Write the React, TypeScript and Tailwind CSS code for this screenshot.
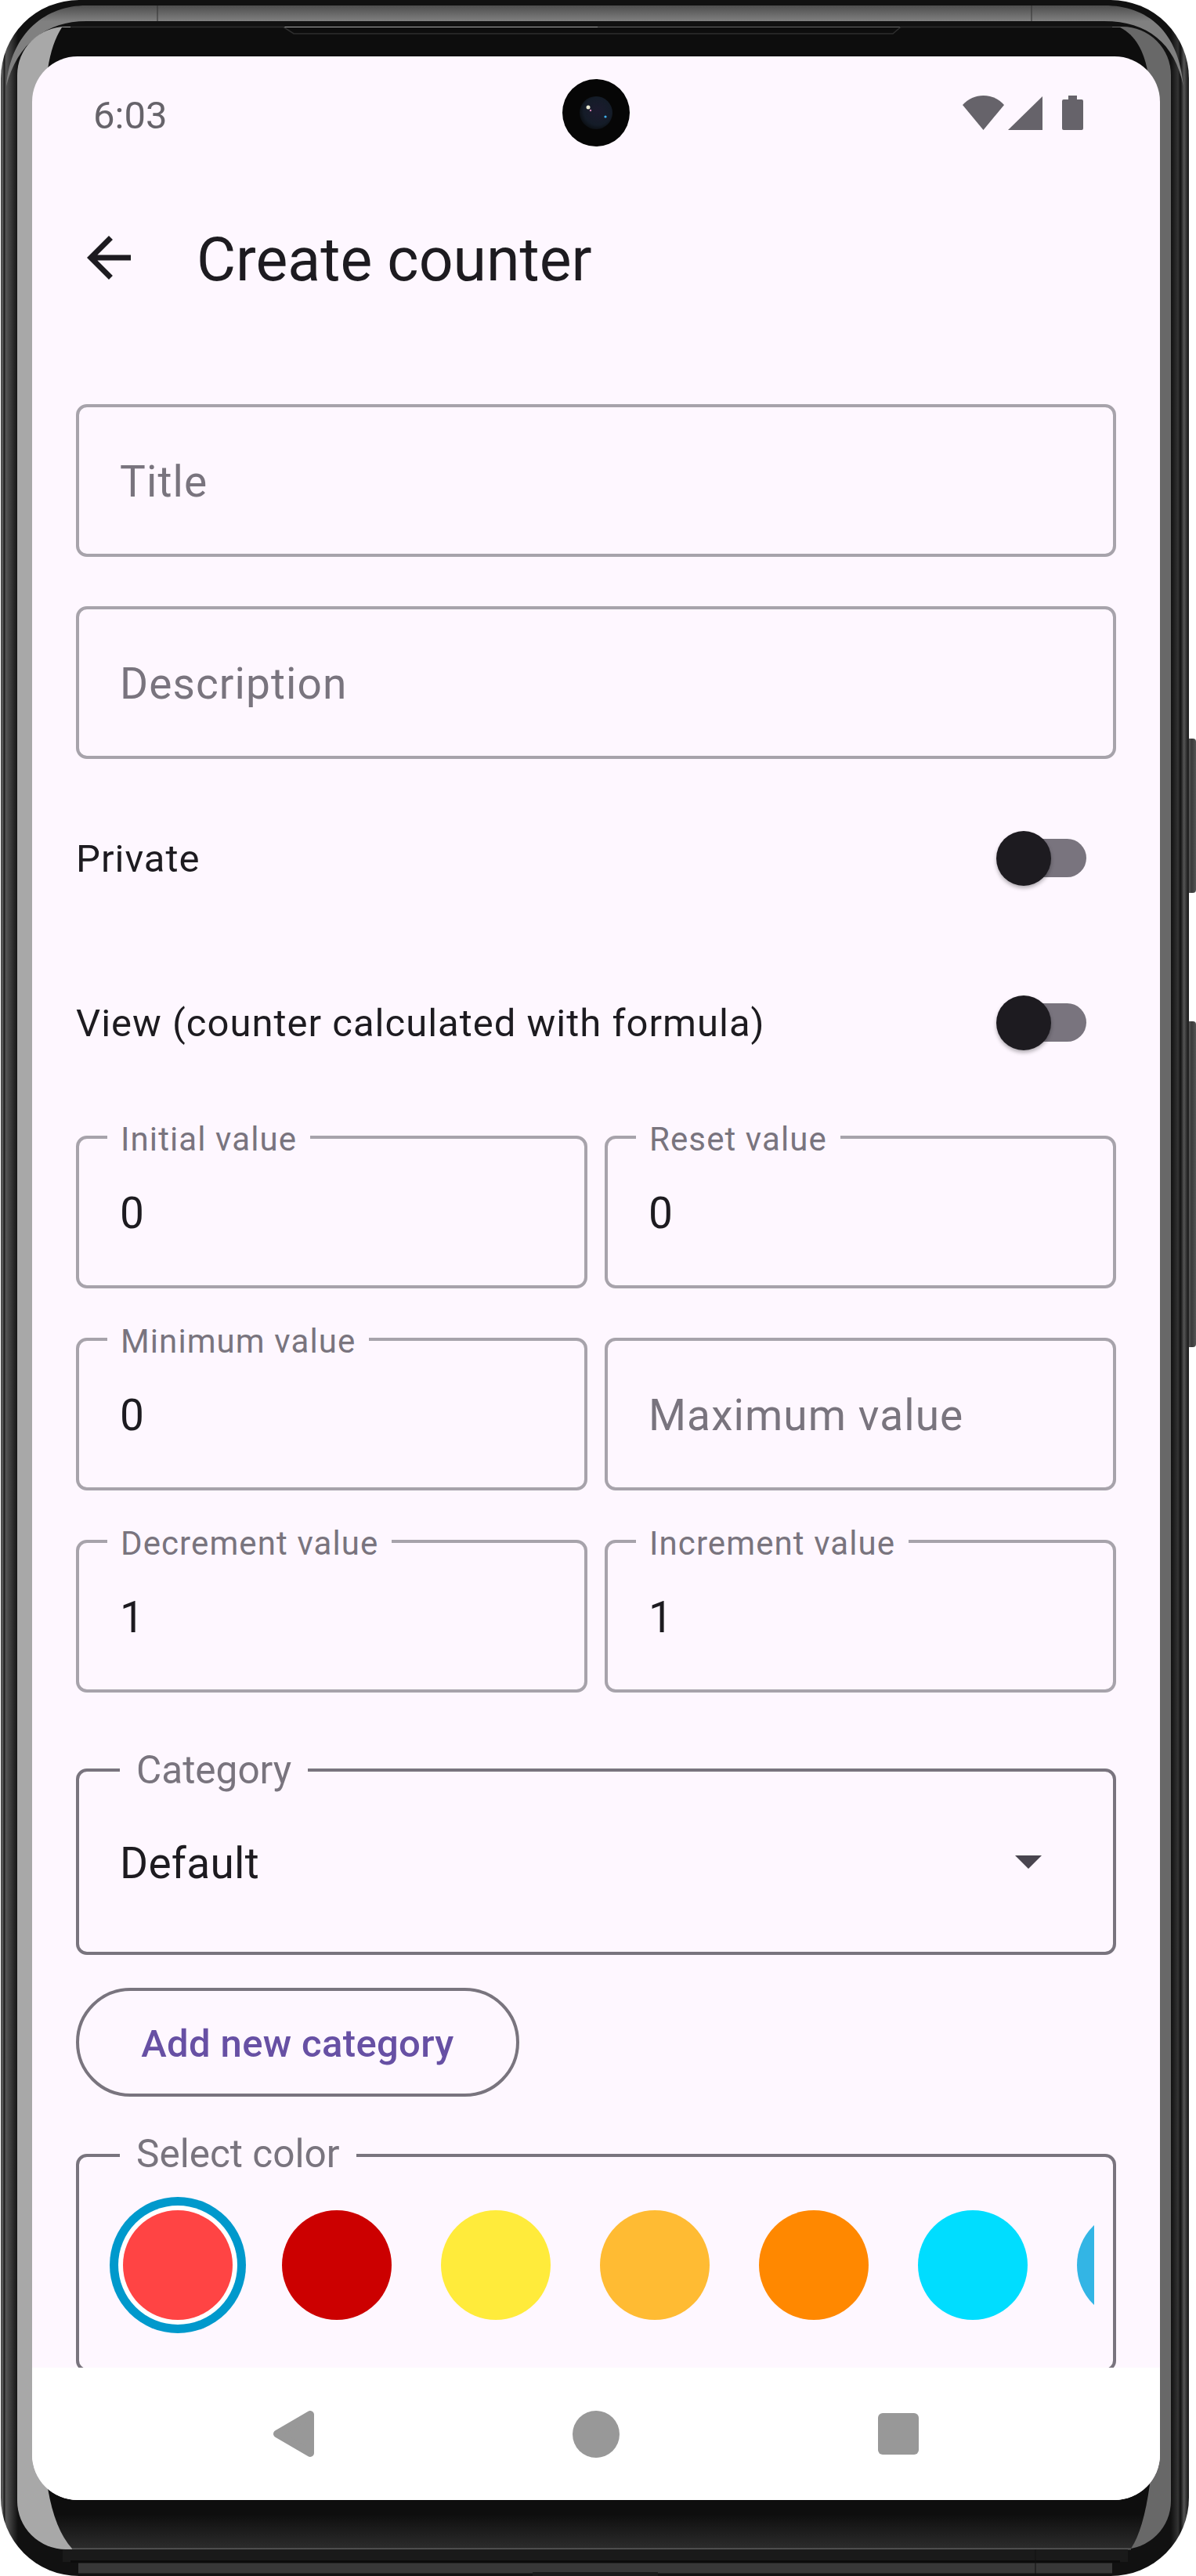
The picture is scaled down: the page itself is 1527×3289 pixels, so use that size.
import React from 'react';

const COLORS = ['#FF4444', '#CC0000', '#FFEB3B', '#FFBB33', '#FF8800', '#00DDFF', '#33B5E5'];

const DeviceFrame = () => (
  <svg className="absolute inset-0" width="1527" height="3289" viewBox="0 0 1527 3289">
    <defs>
      <linearGradient id="rim" x1="0" x2="1527" y1="0" y2="0" gradientUnits="userSpaceOnUse">
        <stop offset="0" stopColor="#2a2a2a" />
        <stop offset="0.002" stopColor="#666" />
        <stop offset="0.0035" stopColor="#1c1c1c" />
        <stop offset="0.005" stopColor="#555" />
        <stop offset="0.009" stopColor="#3a3a3a" />
        <stop offset="0.015" stopColor="#111" />
        <stop offset="0.979" stopColor="#111" />
        <stop offset="0.985" stopColor="#333" />
        <stop offset="0.987" stopColor="#111" />
        <stop offset="0.99" stopColor="#555" />
        <stop offset="0.993" stopColor="#222" />
      </linearGradient>
      <linearGradient id="topBand" x1="0" x2="0" y1="7" y2="27" gradientUnits="userSpaceOnUse">
        <stop offset="0" stopColor="#4d4d4d" />
        <stop offset="1" stopColor="#808080" />
      </linearGradient>
      <linearGradient id="glass" x1="0" x2="1527" y1="0" y2="0" gradientUnits="userSpaceOnUse">
        <stop offset="0.5" stopColor="#a8a8a8" />
        <stop offset="0.5" stopColor="#686868" />
      </linearGradient>
      <linearGradient id="chin" x1="0" x2="0" y1="3192" y2="3254" gradientUnits="userSpaceOnUse">
        <stop offset="0" stopColor="#0e0e0e" />
        <stop offset="0.3" stopColor="#0e0e0e" />
        <stop offset="1" stopColor="#2c2c2c" />
      </linearGradient>
      <linearGradient id="key" x1="1516" x2="1527" y1="0" y2="0" gradientUnits="userSpaceOnUse">
        <stop offset="0" stopColor="#666" />
        <stop offset="0.5" stopColor="#3a3a3a" />
        <stop offset="1" stopColor="#555" />
      </linearGradient>
    </defs>
    <rect x="1514" y="943" width="13" height="197" rx="4" fill="url(#key)" />
    <rect x="1514" y="1304" width="13" height="416" rx="4" fill="url(#key)" />
    <rect x="1" y="0" width="1517" height="3289" rx="100" fill="url(#rim)" />
    <path d="M8 110 C14 40 60 7 110 7 H1410 C1465 7 1505 40 1511 110 C1500 55 1465 27 1410 27 H110 C60 27 22 55 8 110 Z" fill="url(#topBand)" />
    <path d="M201 7 V27 M1317 7 V27" stroke="#333" strokeWidth="1" />
    <rect x="22" y="34" width="1473" height="3221" rx="62" fill="url(#glass)" />
    <path d="M79 35 H1430 C1450 45 1460 65 1465 90 V140 H61 V88 Q66 55 79 35 Z" fill="#0d0d0d" />
    <path d="M90 34.5 H362 L375 43 H1140 L1150 34.5 H1420" fill="none" stroke="#2e2e2e" strokeWidth="1.5" />
    <path d="M61 3120 V3177 Q70 3230 92 3254 H1444 Q1460 3230 1468 3172 V3120 Z" fill="url(#chin)" />
    <path d="M92 3254.5 H1444" stroke="#5a5a5a" strokeWidth="2" />
    <path d="M80 3263 H1440" stroke="#1a1a1a" strokeWidth="16" />
    <path d="M90 3270.5 H1430" stroke="#0c0c0c" strokeWidth="3" />
    <path d="M100 3279 H1420" stroke="#383838" strokeWidth="13" />
    <path d="M680 3286.5 H840" stroke="#1a1a1a" strokeWidth="5" />
    <path d="M1322 3255 V3289" stroke="#111" strokeWidth="1" />
  </svg>
);

const Camera = () => (
  <svg className="absolute left-[677px] top-[29px]" width="86" height="86" viewBox="0 0 86 86">
    <defs>
      <radialGradient id="lens" cx="0.55" cy="0.45" r="0.6">
        <stop offset="0" stopColor="#1c1a2e" />
        <stop offset="0.7" stopColor="#141c28" />
        <stop offset="1" stopColor="#0a0d10" />
      </radialGradient>
    </defs>
    <circle cx="43" cy="43" r="43" fill="#060606" />
    <circle cx="43" cy="43" r="21" fill="url(#lens)" />
    <circle cx="33" cy="36" r="2.5" fill="#e8e8d0" />
    <circle cx="36" cy="40" r="1.2" fill="#d080b0" />
    <circle cx="55" cy="48" r="1.6" fill="#40b0f0" />
  </svg>
);

const StatusBar = () => (
  <div className="relative flex h-[144px] shrink-0 items-center justify-between pl-[78px] pr-[98px]">
    <span className="pt-[6px] text-[49px] leading-none text-[#66636A]">6:03</span>
    <Camera />
    <div className="flex items-center">
      <svg width="53" height="44" viewBox="0 0 53 44">
        <path d="M0 12 C14 -4 39 -4 53 12 L26.5 44 Z" fill="#66636A" />
      </svg>
      <svg className="ml-[5px]" width="44" height="44" viewBox="0 0 44 44">
        <path d="M0 44 L44 1 V44 Z" fill="#66636A" />
      </svg>
      <svg className="ml-[25px]" width="27" height="44" viewBox="0 0 27 44">
        <path d="M8 0 H19 V5 H25 Q27 5 27 7 V42 Q27 44 25 44 H2 Q0 44 0 42 V7 Q0 5 2 5 H8 Z" fill="#66636A" />
      </svg>
    </div>
  </div>
);

const Field = ({
  label,
  value,
  placeholder,
}: {
  label?: string;
  value?: string;
  placeholder?: string;
}) => (
  <div className="relative flex h-[195px] shrink-0 items-center rounded-[14px] border-[4px] border-[#A7A3AB] pl-[52px] pt-[3px]">
    {label && (
      <span className="absolute left-[36px] top-[-23px] bg-[#FEF7FF] px-[17px] text-[42px] leading-[48px] tracking-[1.1px] text-[#79747E]">
        {label}
      </span>
    )}
    {value && <span className="pt-[1px] text-[55px] leading-none tracking-[1.1px] text-[#1D1B20]">{value}</span>}
    {placeholder && <span className="text-[55px] leading-none tracking-[1.1px] text-[#79747E]">{placeholder}</span>}
  </div>
);

const SwitchRow = ({ label, className }: { label: string; className: string }) => (
  <div className={`flex h-[70px] shrink-0 items-center justify-between pr-[38px] ${className}`}>
    <span className="pt-[3px] text-[49px] leading-none tracking-[1px] text-[#1D1B20]">{label}</span>
    <div className="relative h-[49px] w-[97px] rounded-full bg-[#79747E]">
      <div className="absolute left-[-18px] top-[-10px] h-[70px] w-[70px] rounded-full bg-[#1D1B20] shadow-[0_3px_5px_rgba(0,0,0,0.3)]" />
    </div>
  </div>
);

const NavBar = () => (
  <div className="flex h-[169px] shrink-0 items-center gap-[330px] bg-white pl-[307px]">
    <svg width="53" height="59" viewBox="0 0 53 59">
      <polygon points="6,29.5 48,5 48,54" fill="#989898" stroke="#989898" strokeWidth="10" strokeLinejoin="round" />
    </svg>
    <div className="h-[60px] w-[60px] rounded-full bg-[#989898]" />
    <div className="h-[53px] w-[52px] rounded-[6px] bg-[#989898]" />
  </div>
);

export default function App() {
  return (
    <div className="relative h-[3289px] w-[1527px] overflow-hidden bg-white pb-[97px] pl-[41px] pr-[46px] pt-[72px] font-['Roboto',sans-serif]">
      <DeviceFrame />
      <main className="relative flex h-[3120px] w-[1440px] flex-col overflow-hidden rounded-[58px] bg-[#FEF7FF]">
        <StatusBar />
        <div className="flex h-[226px] shrink-0 items-center pl-[56px]">
          <svg width="84" height="84" viewBox="0 0 24 24">
            <path d="M20 11H7.83l5.59-5.59L12 4l-8 8 8 8 1.41-1.41L7.83 13H20v-2z" fill="#1D1B20" />
          </svg>
          <h1 className="ml-[70px] pt-[6px] text-[77px] font-normal leading-none text-[#1D1B20]">Create counter</h1>
        </div>
        <div className="flex min-h-0 flex-1 flex-col overflow-hidden px-[56px] pt-[74px]">
          <Field placeholder="Title" />
          <div className="mt-[63px] shrink-0">
            <Field placeholder="Description" />
          </div>
          <SwitchRow label="Private" className="mt-[91px]" />
          <SwitchRow label="View (counter calculated with formula)" className="mt-[140px]" />
          <div className="mt-[110px] grid shrink-0 grid-cols-2 gap-x-[22px] gap-y-[63px]">
            <Field label="Initial value" value="0" />
            <Field label="Reset value" value="0" />
            <Field label="Minimum value" value="0" />
            <Field placeholder="Maximum value" />
            <Field label="Decrement value" value="1" />
            <Field label="Increment value" value="1" />
          </div>
          <div className="relative mt-[97px] flex h-[238px] shrink-0 items-center justify-between rounded-[14px] border-[4px] border-[#79747E] pl-[52px] pr-[91px]">
            <span className="absolute left-[52px] top-[-26px] bg-[#FEF7FF] px-[21px] text-[49.5px] leading-[48px] text-[#79747E]">
              Category
            </span>
            <span className="pt-[5px] text-[55px] leading-none tracking-[0.3px] text-[#1D1B20]">Default</span>
            <svg width="34" height="17" viewBox="0 0 34 17">
              <path d="M0 0 H34 L17 17 Z" fill="#49454F" />
            </svg>
          </div>
          <button className="mt-[42px] flex h-[139px] w-[566px] shrink-0 items-center justify-center rounded-full border-[4px] border-[#79747E] pt-[4px] text-[49px] font-medium leading-none tracking-[0.35px] text-[#6750A4]">
            Add new category
          </button>
          <div className="relative mt-[73px] h-[278px] shrink-0 rounded-[14px] border-[4px] border-[#79747E]">
            <span className="absolute left-[52px] top-[-28px] bg-[#FEF7FF] px-[21px] text-[49.5px] leading-[48px] text-[#79747E]">
              Select color
            </span>
            <div className="mx-[24px] mt-[50px] flex gap-[63px] overflow-hidden py-[18px] pl-[32px]">
              {COLORS.map((color, i) => (
                <div
                  key={color}
                  className={
                    i === 0
                      ? 'h-[140px] w-[140px] shrink-0 rounded-full shadow-[0_0_0_6px_#fff,0_0_0_17px_#0099CC]'
                      : 'h-[140px] w-[140px] shrink-0 rounded-full'
                  }
                  style={{ backgroundColor: color }}
                />
              ))}
            </div>
          </div>
        </div>
        <NavBar />
      </main>
    </div>
  );
}
